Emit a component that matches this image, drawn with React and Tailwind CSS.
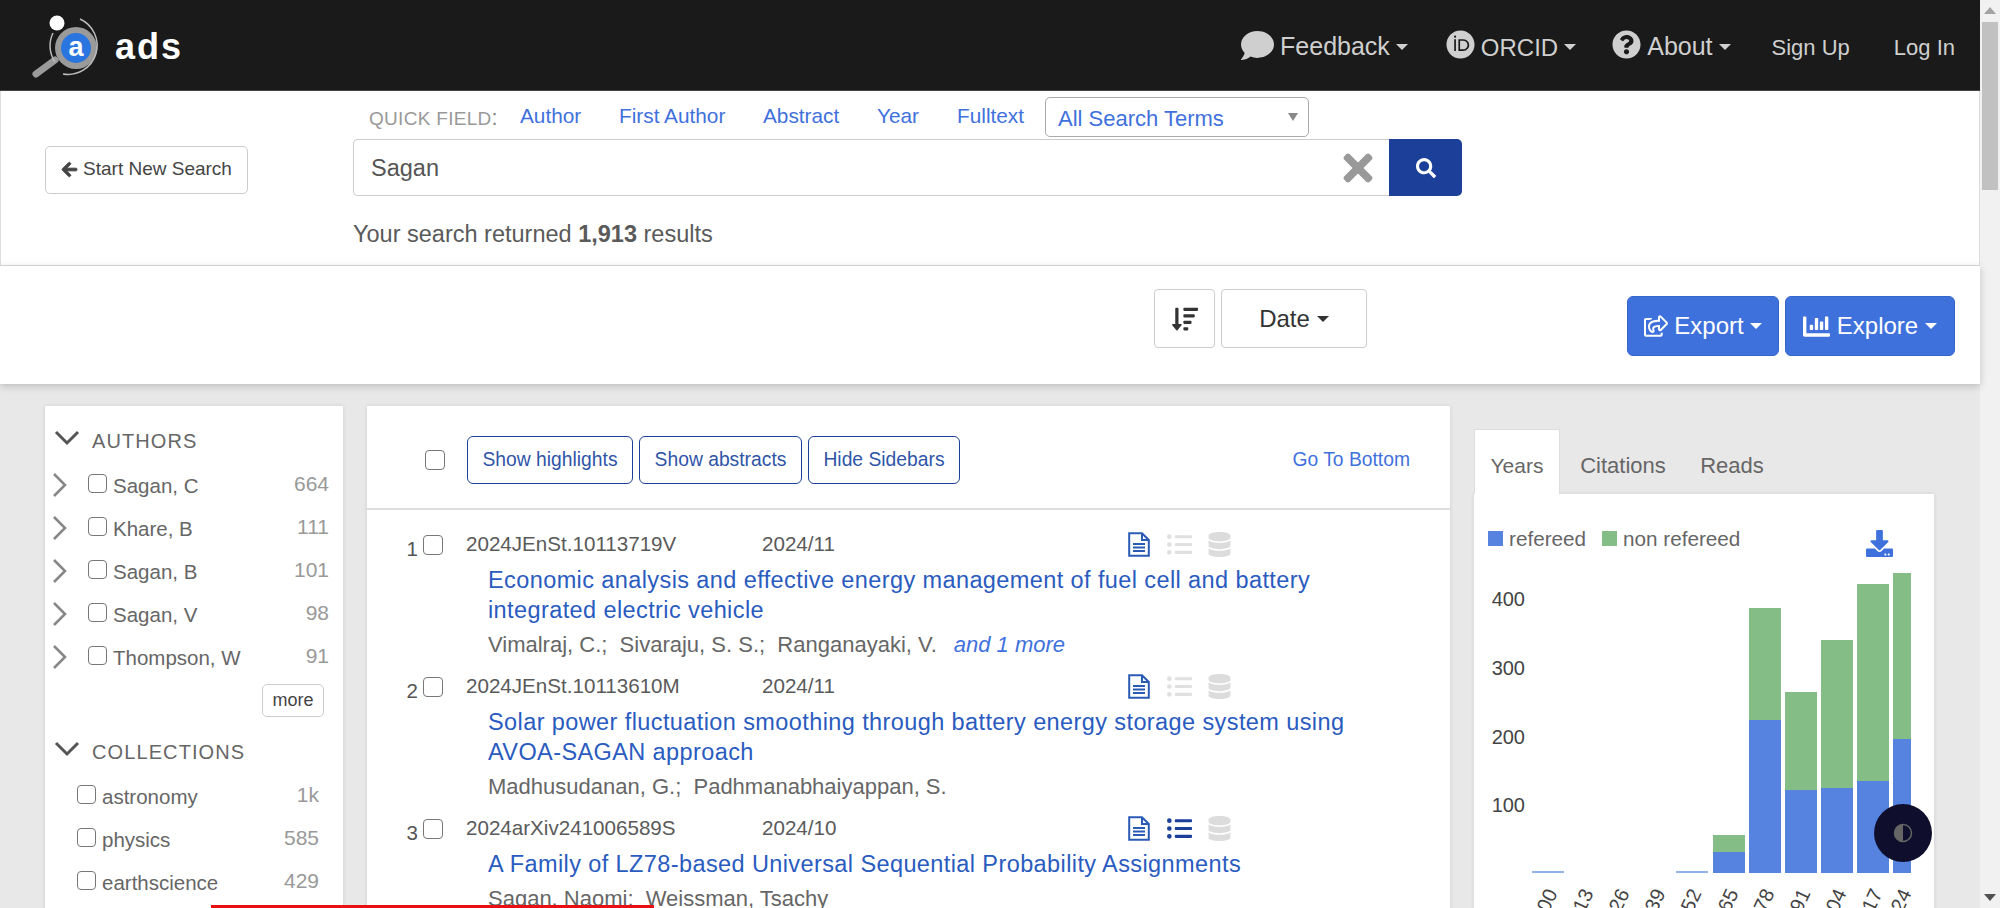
import React from 'react';
import {
  FaArrowLeft, FaChartBar, FaComment, FaDatabase, FaDownload, FaListUl, FaOrcid,
  FaQuestionCircle, FaRegShareSquare, FaSearch, FaSortAmountDown, FaTimes,
} from 'react-icons/fa';

const Caret = ({ className = '' }) => (
  <span className={`inline-block w-0 h-0 border-x-[6px] border-t-[6px] border-x-transparent border-t-current ${className}`} />
);

const Box = ({ className = '' }) => (
  <span className={`block w-[19px] h-[19px] shrink-0 rounded-[4px] border-[1.5px] border-[#777] bg-white ${className}`} />
);

const Logo = () => (
  <svg width="80" height="80" viewBox="0 0 80 80" className="shrink-0 mt-[10px]">
    <path d="M5 64 L24 50" stroke="#9a9a9a" strokeWidth="7" strokeLinecap="round" />
    <circle cx="45" cy="38" r="21" fill="#9a9a9a" />
    <circle cx="45" cy="38" r="15" fill="#2a75e0" />
    <text x="45" y="46" textAnchor="middle" fontSize="27" fontWeight="700" fill="#fff" fontFamily="Liberation Sans">a</text>
    <path d="M49 9 A29 29 0 0 1 32 64" stroke="#bbb" strokeWidth="1.5" fill="none" />
    <path d="M24 52 A29 29 0 0 1 22 23" stroke="#bbb" strokeWidth="1.5" fill="none" />
    <circle cx="26" cy="13" r="7.5" fill="#fff" />
  </svg>
);

const NavMenu = ({ icon, label, className = '', iconClass = '', textClass = 'text-[25px]' }) => (
  <div className={`flex items-center text-[#cfcfcf] ${className}`}>
    <span className={iconClass}>{icon}</span>
    <span className={`ml-[6px] ${textClass}`}>{label}</span>
    <Caret className="ml-[6px]" />
  </div>
);

const Navbar = () => (
  <header className="h-[91px] bg-[#1a1a1a] border-b border-[#444] flex items-center pl-[31px] pr-[25px]">
    <Logo />
    <span className="ml-[4px] mt-[4px] text-[36px] font-bold tracking-[2px] text-white">ads</span>
    <div className="ml-auto mt-[4px] flex items-center">
      <NavMenu icon={<FaComment size={33} />} label="Feedback" iconClass="-mt-[4px]" />
      <NavMenu icon={<FaOrcid size={29} />} label="ORCID" className="ml-[38px]" iconClass="-mt-[6px]" textClass="text-[24px] mt-[2px]" />
      <NavMenu icon={<FaQuestionCircle size={29} />} label="About" className="ml-[36px]" iconClass="-mt-[6px]" />
      <span className="ml-[41px] text-[22px] text-[#cfcfcf]">Sign Up</span>
      <span className="ml-[44px] text-[22px] text-[#cfcfcf]">Log In</span>
    </div>
  </header>
);

const SearchPanel = () => (
  <section className="h-[175px] bg-white border border-[#ddd] border-t-0 flex">
    <div className="w-[352px] shrink-0 pl-[44px] pb-[17px] flex items-center">
      <button className="h-[48px] w-[203px] border border-[#ccc] rounded-[5px] flex items-center justify-center gap-[5px] text-[19px] text-[#444]">
        <FaArrowLeft size={17} stroke="currentColor" strokeWidth={30} />
        Start New Search
      </button>
    </div>
    <div className="flex-1">
      <div className="mt-[6px] h-[42px] flex items-start">
        <span className="ml-[16px] mt-[4px] w-[151px] shrink-0 text-[19px] tracking-[0.3px] text-[#999]">QUICK FIELD<span className="text-[22px] text-[#888]">:</span></span>
        <div className="relative h-[38px] text-[20.8px] text-[#3f71dd] flex items-center">
          <span className="w-[99px]">Author</span>
          <span className="w-[144px]">First Author</span>
          <span className="w-[114px]">Abstract</span>
          <span className="w-[80px]">Year</span>
          <span className="w-[88px]">Fulltext</span>
        </div>
        <div className="h-[40px] w-[264px] border border-[#aaa] rounded-[5px] flex items-center justify-between pl-[12px] pr-[10px] text-[22px] text-[#3f71dd]">
          <span className="mt-[2px]">All Search Terms</span>
          <span className="w-0 h-0 border-x-[5px] border-t-[8px] border-x-transparent border-t-[#888]" />
        </div>
      </div>
      <div className="flex h-[57px]">
        <div className="w-[1036px] border border-[#ccc] border-r-0 rounded-l-[5px] flex items-center justify-between pl-[17px] pr-[10px] text-[23.5px] text-[#555]">
          <span className="mt-[2px]">Sagan</span>
          <FaTimes size={42} className="text-[#999]" />
        </div>
        <button className="w-[73px] bg-[#1c4099] rounded-r-[5px] flex items-center justify-center text-white">
          <FaSearch size={20} />
        </button>
      </div>
      <p className="mt-[23px] text-[23.5px] leading-[30px] text-[#5a5a5a]">
        Your search returned <b>1,913</b> results
      </p>
    </div>
  </section>
);

const SortBar = () => (
  <section className="relative z-10 h-[118px] bg-white shadow-[0_2px_8px_rgba(0,0,0,0.2)] flex items-start pl-[1154px] pr-[25px]">
    <button className="mt-[23px] w-[61px] h-[59px] border border-[#ccc] rounded-[4px] flex items-center justify-center text-[#333]">
      <FaSortAmountDown size={26} />
    </button>
    <button className="mt-[23px] ml-[6px] w-[146px] h-[59px] border border-[#ccc] rounded-[4px] flex items-center justify-center gap-[7px] text-[24px] text-[#333]">
      Date <Caret />
    </button>
    <div className="ml-auto mt-[30px] flex gap-[6px] text-[24px] text-white">
      <button className="w-[152px] h-[60px] bg-[#3f71dd] border border-[#3566cc] rounded-[6px] flex items-center justify-center gap-[6px]">
        <FaRegShareSquare size={24} /> Export <Caret />
      </button>
      <button className="w-[170px] h-[60px] bg-[#3f71dd] border border-[#3566cc] rounded-[6px] flex items-center justify-center gap-[7px]">
        <FaChartBar size={27} /> Explore <Caret />
      </button>
    </div>
  </section>
);

const authors = [
  ['Sagan, C', '664'],
  ['Khare, B', '111'],
  ['Sagan, B', '101'],
  ['Sagan, V', '98'],
  ['Thompson, W', '91'],
];

const collections = [
  ['astronomy', '1k'],
  ['physics', '585'],
  ['earthscience', '429'],
];

const ArrowDown = () => (
  <svg width="26" height="16" viewBox="0 0 26 16" className="shrink-0 -mt-[6px]">
    <path d="M2 2 L13 13 L24 2" fill="none" stroke="#555" strokeWidth="3" />
  </svg>
);

const ArrowRight = () => (
  <svg width="16" height="26" viewBox="0 0 16 26" className="shrink-0 -mt-[4px]">
    <path d="M2 2 L13 13 L2 24" fill="none" stroke="#888" strokeWidth="2.6" />
  </svg>
);

const FacetTitle = ({ label }) => (
  <div className="flex items-center h-[30px] pl-[9px]">
    <ArrowDown />
    <span className="ml-[12px] text-[20px] tracking-[1.1px] text-[#666]">{label}</span>
  </div>
);

const Facets = () => (
  <aside className="w-[298px] h-[600px] shrink-0 bg-white shadow-[0_0_4px_rgba(0,0,0,0.12)] pt-[20px]">
    <FacetTitle label="AUTHORS" />
    <div className="mt-[9px]">
      {authors.map(([name, count]) => (
        <div key={name} className="flex items-center h-[43px] pl-[7px] pr-[14px]">
          <ArrowRight />
          <Box className="ml-[20px] -mt-[6px]" />
          <span className="ml-[6px] text-[20.5px] text-[#666]">{name}</span>
          <span className="ml-auto text-[21px] text-[#999] -mt-[5px]">{count}</span>
        </div>
      ))}
    </div>
    <div className="flex justify-end pr-[19px] mt-[4px]">
      <button className="w-[62px] h-[33px] border border-[#ccc] rounded-[5px] text-[18px] text-[#444]">more</button>
    </div>
    <div className="mt-[20px]">
      <FacetTitle label="COLLECTIONS" />
    </div>
    <div className="mt-[9px]">
      {collections.map(([name, count]) => (
        <div key={name} className="flex items-center h-[43px] pl-[32px] pr-[24px]">
          <Box className="-mt-[6px]" />
          <span className="ml-[6px] text-[20.5px] text-[#666]">{name}</span>
          <span className="ml-auto text-[21px] text-[#999] -mt-[5px]">{count}</span>
        </div>
      ))}
    </div>
  </aside>
);

const results = [
  {
    code: '2024JEnSt.10113719V',
    date: '2024/11',
    title: ['Economic analysis and effective energy management of fuel cell and battery', 'integrated electric vehicle'],
    names: 'Vimalraj, C.;  Sivaraju, S. S.;  Ranganayaki, V.',
    more: 'and 1 more',
  },
  {
    code: '2024JEnSt.10113610M',
    date: '2024/11',
    title: ['Solar power fluctuation smoothing through battery energy storage system using', 'AVOA-SAGAN approach'],
    names: 'Madhusudanan, G.;  Padhmanabhaiyappan, S.',
  },
  {
    code: '2024arXiv241006589S',
    date: '2024/10',
    title: ['A Family of LZ78-based Universal Sequential Probability Assignments'],
    names: 'Sagan, Naomi;  Weissman, Tsachy',
    refs: true,
  },
];

const DocIcon = () => (
  <svg width="22" height="25" viewBox="0 0 22 25" className="shrink-0 text-[#2a5bb5]">
    <path d="M1.2 1.2 H14 L20.8 8 V23.8 H1.2 Z M14 1.2 V8 H20.8" fill="none" stroke="currentColor" strokeWidth="2" />
    <path d="M5 12 H17 M5 15.5 H17 M5 19 H17" stroke="currentColor" strokeWidth="1.8" />
  </svg>
);

const ResultItem = ({ item, index }) => (
  <article className="pb-[10px]">
    <div className="flex items-center h-[34px] pt-[1px]">
      <span className="w-[51px] text-right text-[20.5px] text-[#555] mt-[10px]">{index}</span>
      <Box className="ml-[5px] w-[20px] h-[20px]" />
      <span className="ml-[23px] w-[296px] text-[20.6px] text-[#5a5a5a]">{item.code}</span>
      <span className="w-[366px] text-[20.6px] text-[#5a5a5a]">{item.date}</span>
      <DocIcon />
      <FaListUl size={25} className={`ml-[17px] ${item.refs ? 'text-[#1c4099]' : 'text-[#e0e0e0]'}`} />
      <FaDatabase size={25} className="ml-[15px] text-[#dcdcdc]" />
    </div>
    <h3 className="mt-[4px] pl-[121px] text-[23.5px] leading-[30px] tracking-[0.4px] font-normal text-[#2a5bbf]">
      {item.title.map((line) => (
        <span key={line} className="block">{line}</span>
      ))}
    </h3>
    <p className="mt-[6px] pl-[121px] h-[28px] text-[22px] leading-[28px] text-[#666] whitespace-pre">
      {item.names}
      {item.more && <i className="ml-[17px] text-[#3f71dd]">{item.more}</i>}
    </p>
  </article>
);

const Results = () => (
  <main className="w-[1083px] h-[600px] shrink-0 bg-white shadow-[0_0_4px_rgba(0,0,0,0.12)]">
    <div className="h-[104px] border-b-2 border-[#ddd] flex items-center pt-[5px] pl-[58px] pr-[40px]">
      <Box className="w-[20px] h-[20px]" />
      <div className="ml-[22px] flex gap-[6px] text-[19.3px] text-[#2f55a8]">
        <button className="w-[166px] h-[48px] pt-[1px] border-[1.5px] border-[#1c4099] rounded-[6px]">Show highlights</button>
        <button className="w-[163px] h-[48px] pt-[1px] border-[1.5px] border-[#1c4099] rounded-[6px]">Show abstracts</button>
        <button className="w-[152px] h-[48px] pt-[1px] border-[1.5px] border-[#1c4099] rounded-[6px]">Hide Sidebars</button>
      </div>
      <span className="ml-auto mt-[2px] text-[19.3px] text-[#3f71dd]">Go To Bottom</span>
    </div>
    <div className="pt-[17px]">
      {results.map((item, i) => (
        <ResultItem key={item.code} item={item} index={i + 1} />
      ))}
    </div>
  </main>
);

// x and heights read off the reference, chart panel starts at x 1474 / y 494 after the legend
const bars = [
  { x: 58, w: 32, blue: 2, green: 0 },
  { x: 202, w: 32, blue: 2, green: 0 },
  { x: 239, w: 32, blue: 21, green: 17 },
  { x: 275, w: 32, blue: 153, green: 112 },
  { x: 311, w: 32, blue: 83, green: 98 },
  { x: 347, w: 32, blue: 85, green: 148 },
  { x: 383, w: 32, blue: 92, green: 197 },
  { x: 419, w: 18, blue: 134, green: 166 },
];

const ticks = [
  ['1900', 74], ['1913', 110], ['1926', 146], ['1939', 182], ['1952', 218], ['1965', 255],
  ['1978', 291], ['1991', 327], ['2004', 363], ['2017', 399], ['2024', 428],
];

const YearChart = () => {
  const base = 314;
  return (
    <svg width="460" height="350" viewBox="0 0 460 350" className="block" fontFamily="Liberation Sans">
      {[[400, 47], [300, 116], [200, 185], [100, 253]].map(([v, y]) => (
        <text key={v} x="51" y={y} textAnchor="end" fontSize="20" fill="#444">{v}</text>
      ))}
      {bars.map((b) => (
        <g key={b.x}>
          <rect x={b.x} y={base - b.blue - b.green} width={b.w} height={b.green} fill="#84bd86" />
          <rect x={b.x} y={base - b.blue} width={b.w} height={b.blue} fill={b.blue < 5 ? '#8fb0ea' : '#5683e0'} />
        </g>
      ))}
      {ticks.map(([label, x]) => (
        <text key={label} transform={`translate(${x + 10} 334) rotate(-65)`} textAnchor="end" fontSize="20" fill="#444">{label}</text>
      ))}
    </svg>
  );
};

const Graphs = () => (
  <aside className="w-[460px] shrink-0 pt-[23px]">
    <div className="flex h-[65px] text-[22px] text-[#666]">
      <span className="w-[86px] pt-[7px] bg-white border border-[#ddd] border-b-0 flex items-center justify-center text-[21px]">Years</span>
      <span className="w-[126px] pt-[7px] flex items-center justify-center">Citations</span>
      <span className="w-[92px] pt-[7px] flex items-center justify-center">Reads</span>
    </div>
    <div className="bg-white shadow-[0_0_4px_rgba(0,0,0,0.12)] pt-[30px] h-[500px]">
      <div className="flex items-start h-[35px] pl-[14px] pr-[41px] text-[20.7px] text-[#666]">
        <span className="w-[15px] h-[15px] bg-[#5683e0] mt-[7px]" />
        <span className="ml-[6px] mt-[1px] leading-[28px]">refereed</span>
        <span className="ml-[16px] w-[15px] h-[15px] bg-[#84bd86] mt-[7px]" />
        <span className="ml-[6px] mt-[1px] leading-[28px]">non refereed</span>
        <FaDownload size={27} className="ml-auto mt-[6px] text-[#3f71dd]" />
      </div>
      <YearChart />
    </div>
  </aside>
);

const Scrollbar = () => (
  <div className="w-[20px] shrink-0 bg-[#f1f1f1] flex flex-col items-center">
    <span className="mt-[7px] w-0 h-0 border-x-[6px] border-b-[7px] border-x-transparent border-b-[#a3a3a3]" />
    <span className="mt-[8px] w-[16px] h-[168px] bg-[#c1c1c1]" />
    <span className="mt-auto mb-[7px] w-0 h-0 border-x-[6px] border-t-[7px] border-x-transparent border-t-[#505050]" />
  </div>
);

const ThemeToggle = () => (
  <button className="absolute left-[1874px] top-[804px] w-[58px] h-[58px] rounded-full bg-[#0f0f2d] flex items-center justify-center">
    <svg width="20" height="20" viewBox="0 0 20 20">
      <circle cx="10" cy="10" r="8.5" fill="none" stroke="#666" strokeWidth="1.5" />
      <path d="M10 1.5 A8.5 8.5 0 0 0 10 18.5 Z" fill="#666" />
    </svg>
  </button>
);

const App = () => (
  <div className="relative h-screen overflow-hidden flex font-['Liberation_Sans',sans-serif] bg-[#e8e8e8]">
    <div className="w-[1980px] shrink-0">
      <Navbar />
      <SearchPanel />
      <SortBar />
      <div className="flex items-start pl-[45px] pt-[22px] gap-[24px]">
        <Facets />
        <Results />
        <Graphs />
      </div>
    </div>
    <Scrollbar />
    <ThemeToggle />
    <div className="absolute left-[211px] top-[905px] w-[443px] h-[3px] bg-[#e81010]" />
  </div>
);

export default App;
